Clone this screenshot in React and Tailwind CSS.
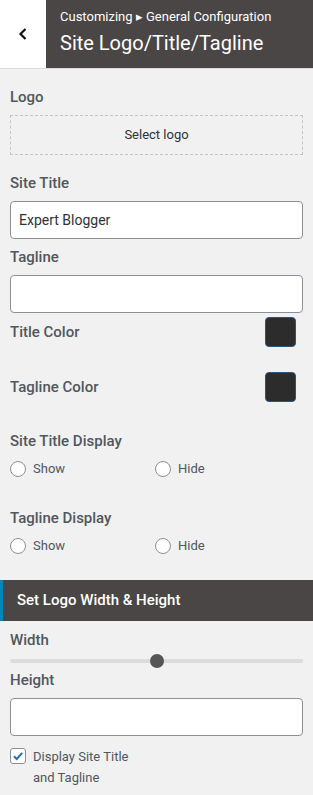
import React from "react";

function Label({ children, className = "" }) {
  return (
    <div className={"text-[15px] leading-[20px] font-medium text-[#50575e] " + className}>
      {children}
    </div>
  );
}

function Radio({ label }) {
  return (
    <label className="flex items-center gap-[7px] w-[145px] h-[20px]">
      <span className="w-[16px] h-[16px] rounded-full border border-[#8c8f94] bg-white shrink-0" />
      <span className="text-[13px] text-[#50575e]">{label}</span>
    </label>
  );
}

function Swatch() {
  return (
    <div className="w-[31px] h-[30px] rounded-[4px] border-[1.5px] border-[#2a5580] bg-[#2c2c2c]" />
  );
}

export default function App() {
  return (
    <div
      className="w-[313px] h-[795px] bg-[#f1f1f1] overflow-hidden"
      style={{ fontFamily: "Roboto, 'Liberation Sans', sans-serif" }}
    >
      <div className="flex h-[69px] border-b border-[#dcdcde]">
        <div className="w-[46px] bg-white flex items-center justify-center">
          <svg width="12" height="14" viewBox="0 0 12 14">
            <path d="M8.5 2 L3.5 7 L8.5 12" fill="none" stroke="#111" strokeWidth="2.2" />
          </svg>
        </div>
        <div className="flex-1 bg-[#4a4645] pl-[14px] pt-[9px]">
          <div className="text-[13px] leading-[16px] text-white">
            Customizing ▸ General Configuration
          </div>
          <div className="mt-[6px] text-[20px] leading-[25px] text-white">
            Site Logo/Title/Tagline
          </div>
        </div>
      </div>

      <div className="px-[10px]">
        <Label className="mt-[18px]">Logo</Label>
        <div className="mt-[8px] h-[40px] border border-dashed border-[#c3c4c7] flex items-center justify-center text-[13px] text-[#2c3338]">
          Select logo
        </div>

        <Label className="mt-[18px]">Site Title</Label>
        <div className="mt-[8px] h-[38px] bg-white border border-[#8c8f94] rounded-[4px] flex items-center px-[8px] text-[14px] text-[#2c3338]">
          Expert Blogger
        </div>

        <Label className="mt-[8px]">Tagline</Label>
        <div className="mt-[8px] h-[38px] bg-white border border-[#8c8f94] rounded-[4px]" />

        <div className="mt-[4px] flex items-center justify-between pr-[7px]">
          <Label>Title Color</Label>
          <Swatch />
        </div>
        <div className="mt-[25px] flex items-center justify-between pr-[7px]">
          <Label>Tagline Color</Label>
          <Swatch />
        </div>

        <Label className="mt-[29px]">Site Title Display</Label>
        <div className="mt-[8px] flex">
          <Radio label="Show" />
          <Radio label="Hide" />
        </div>

        <Label className="mt-[29px]">Tagline Display</Label>
        <div className="mt-[8px] flex">
          <Radio label="Show" />
          <Radio label="Hide" />
        </div>
      </div>

      <div className="mt-[24px] h-[41px] bg-[#4a4645] border-l-[3px] border-[#0085ba] flex items-center pl-[14px] text-[15px] font-medium text-white">
        Set Logo Width &amp; Height
      </div>

      <div className="px-[10px]">
        <Label className="mt-[9px]">Width</Label>
        <div className="relative mt-[4px] h-[14px] flex items-center">
          <div className="w-full h-[4px] rounded-full bg-[#dcdcdc]" />
          <div className="absolute left-[140px] top-0 w-[14px] h-[14px] rounded-full bg-[#555]" />
        </div>

        <Label className="mt-[2px]">Height</Label>
        <div className="mt-[8px] h-[38px] bg-white border border-[#8c8f94] rounded-[4px]" />

        <div className="mt-[10px] flex items-start gap-[7px]">
          <span className="mt-[2px] w-[16px] h-[16px] rounded-[3px] border border-[#8c8f94] bg-white flex items-center justify-center shrink-0">
            <svg width="12" height="12" viewBox="0 0 12 12">
              <path d="M2 6.2 L4.8 9 L10.2 2.8" fill="none" stroke="#2271b1" strokeWidth="2" />
            </svg>
          </span>
          <span className="text-[13px] leading-[21px] text-[#50575e]">
            Display Site Title
            <br />
            and Tagline
          </span>
        </div>
      </div>
    </div>
  );
}
